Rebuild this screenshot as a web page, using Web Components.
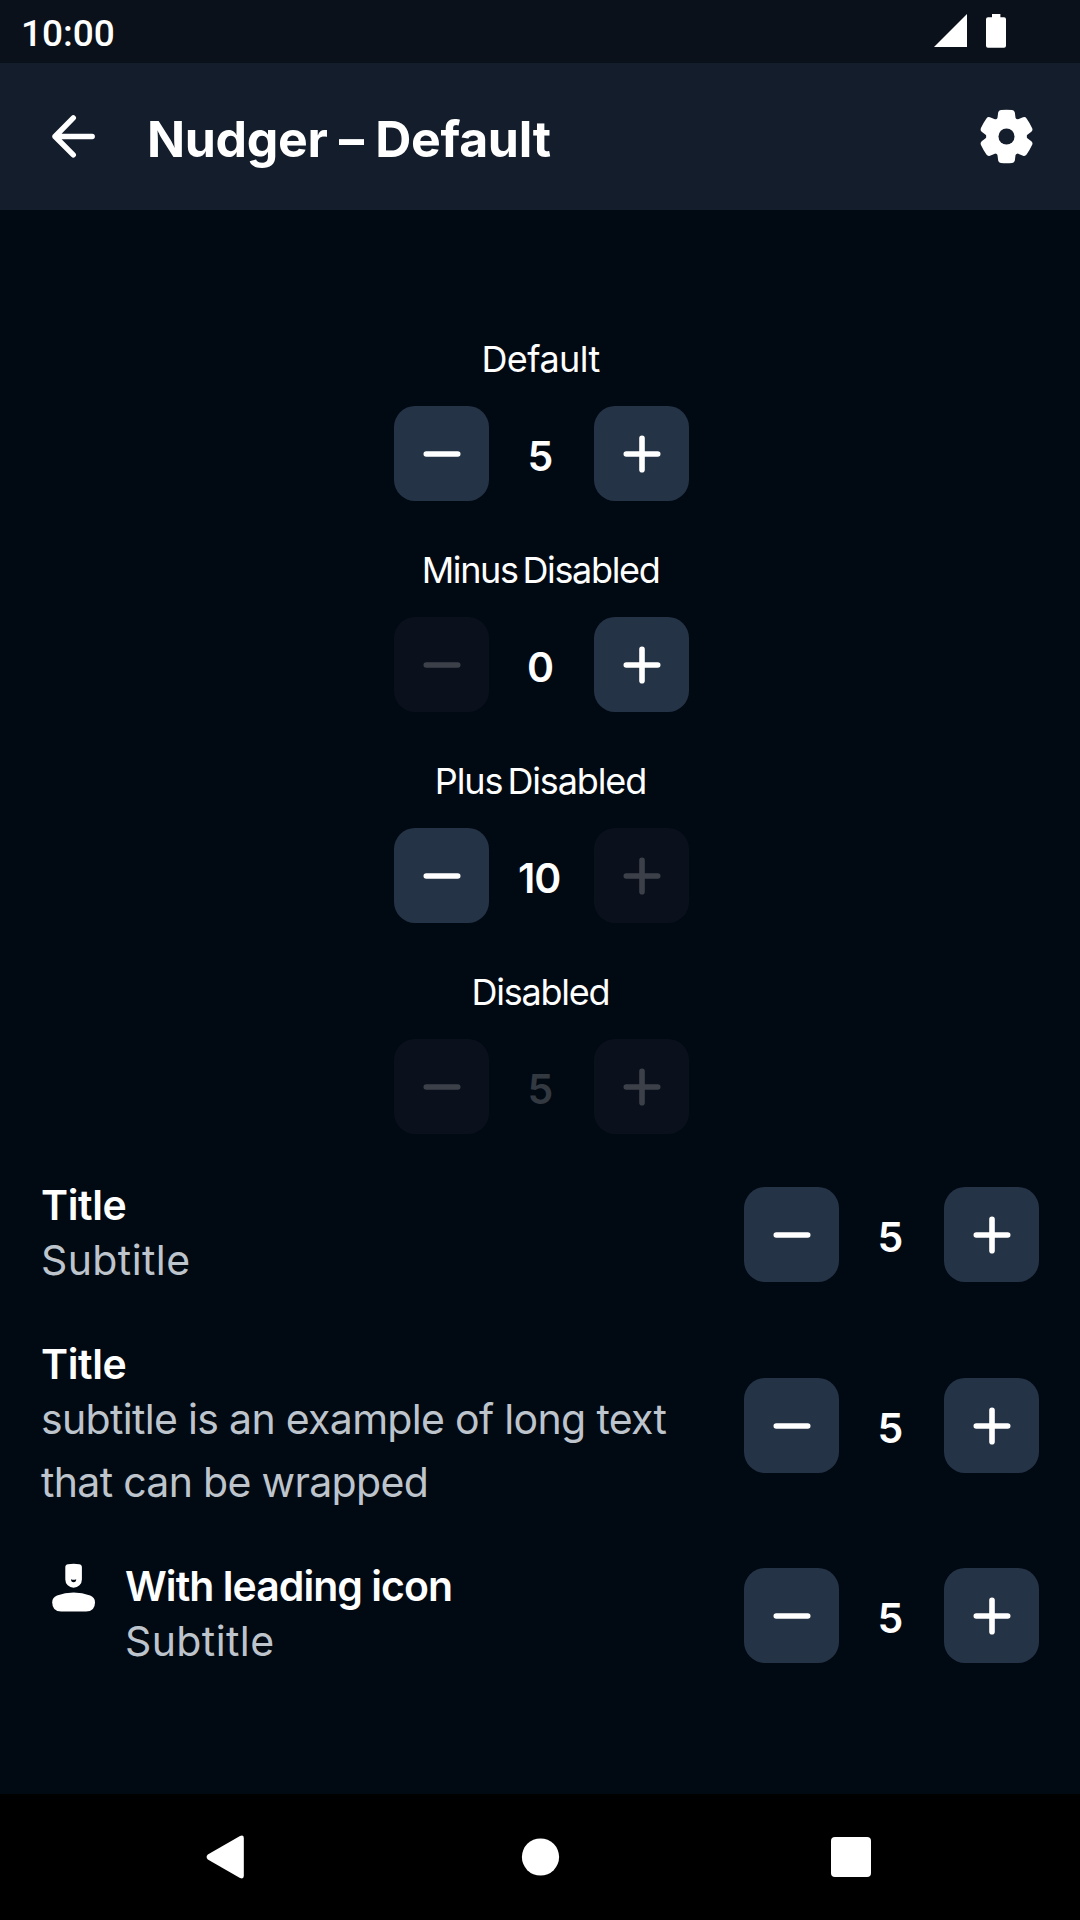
<!DOCTYPE html>
<html lang="en">
<head>
<meta charset="utf-8">
<title>Nudger – Default</title>
<style>
html,body{margin:0;padding:0;background:#010913}
body{width:1080px;height:1920px;overflow:hidden;font-family:Inter,"Liberation Sans",sans-serif;color:#fff}
</style>
</head>
<body>
<nudger-screen></nudger-screen>
<script>
const define = (name, html) => customElements.define(name, class extends HTMLElement {
  connectedCallback() {
    if (this.shadowRoot) return;
    const t = document.createElement('template');
    t.innerHTML = typeof html === 'function' ? html(this) : html;
    this.attachShadow({mode: 'open'}).append(t.content);
  }
});

define('status-bar', `<style>
:host{display:flex;justify-content:space-between;height:63px;box-sizing:border-box;padding-left:21px;padding-right:74px;background:#0a111a;font:500 37px/63px Roboto,sans-serif}
span{padding-top:2px;height:61px}
svg{display:block;width:72px;height:63px}
</style><span>10:00</span>
<svg viewBox="934 0 72 63" fill="#fff"><path d="M934 47L967 14V47Z"/><path d="M992 14h8.400v3.300h3.600q2 0 2 2v26.500q0 2-2 2h-16q-2 0-2-2V19.300q0-2 2-2h4Z"/></svg>`);

define('app-bar', `<style>
:host{display:flex;align-items:center;height:147px;box-sizing:border-box;padding:0 42px;background:#131d2b}
svg{display:block;width:63px;height:63px;flex:none}
h1{flex:1;margin:0 0 0 42px;padding-top:4px;font:700 50px/60px Inter,sans-serif;letter-spacing:-.32px;white-space:nowrap}
</style>
<svg viewBox="42 105 63 63" fill="none" stroke="#fff" stroke-width="5.400" stroke-linecap="round" stroke-linejoin="round"><path d="M92.200 136.500H55M73.300 117.900L55 136.500L73.300 154.900"/></svg>
<h1><slot></slot></h1>
<svg viewBox="-31 -31 62 62"><g fill="#fff"><circle r="20"/><g id="a"><path id="t" d="M-10.500-14Q-9-17-8.800-19L-8.200-23.500Q-7.800-25.700-5.500-26Q0-26.500 5.500-26Q7.800-25.700 8.200-23.500L8.800-19Q9-17 10.500-14Z"/><use href="#t" transform="rotate(60)"/><use href="#t" transform="rotate(120)"/></g><use href="#a" transform="rotate(180)"/></g><circle r="7.900" fill="#131d2b"/></svg>`);

define('nudger-button', el => `<style>
:host{display:block;width:95px;height:95px;border-radius:21px;background:#243346;color:#fff;flex:none}
:host([disabled]){background:#0b111c;color:#3c4049}
svg{display:block}
</style><svg width="95" height="95" viewBox="0 0 95 95" fill="none" stroke="currentColor" stroke-width="5.600" stroke-linecap="round"><path d="M32.300 48H63.700${el.getAttribute('kind') === 'plus' ? 'M48 32.300V63.700' : ''}"/></svg>`);

define('value-nudger', el => {
  const off = el.getAttribute('off') || '';
  const dis = k => off === k || off === 'all' ? 'disabled' : '';
  const v = el.getAttribute('value');
  return `<style>
:host{display:flex;width:295px;height:95px;flex:none}
span{flex:1;box-sizing:border-box;padding:3px ${v.length > 1 ? 5 : 2}px 0 0;text-align:center;font:600 41px/95px Inter,sans-serif;color:${off === 'all' ? '#333941' : '#fff'};letter-spacing:${v.length > 1 ? '-1.2px' : '0'}}
</style><nudger-button kind="minus" ${dis('minus')}></nudger-button><span>${v}</span><nudger-button kind="plus" ${dis('plus')}></nudger-button>`;
});

define('labelled-nudger', el => `<style>
:host{display:flex;flex-direction:column;align-items:center;gap:21px;padding-left:3px}
label{padding-right:2px;font:400 36px/52px Inter,sans-serif;letter-spacing:${el.getAttribute('track')}px;word-spacing:-4px;white-space:nowrap}
</style><label><slot></slot></label><value-nudger value="${el.getAttribute('value')}" off="${el.getAttribute('off') || ''}"></value-nudger>`);

define('nudger-row', el => `<style>
:host{display:flex;align-items:center;justify-content:space-between;padding:0 41px}
.lead{display:flex;align-items:flex-start}
.text{padding-top:4px;margin-bottom:-1px}
.t{font:600 41px/47px Inter,sans-serif;letter-spacing:${el.getAttribute('track') || '-.4'}px}
.s{font:400 41px/63px Inter,sans-serif;color:#bdc4cb;letter-spacing:${el.getAttribute('subtrack') || '.4'}px;white-space:nowrap}
::slotted(svg){display:block;margin:0 20px 0 1px}
</style><div class="lead"><slot name="icon"></slot><div class="text"><div class="t"><slot></slot></div><div class="s"><slot name="subtitle"></slot></div></div></div><value-nudger value="5"></value-nudger>`);

define('navigation-bar', `<style>
:host{display:flex;justify-content:space-between;align-items:center;height:126px;box-sizing:border-box;padding:0 209px 0 206px;background:#000}
svg{display:block;overflow:visible}
</style>
<svg width="38" height="44" viewBox="0 0 38 44" fill="#fff"><path d="M1.800 19.500L34 1Q37.800-.5 37.800 3V41Q37.800 44.500 34 43L1.800 24.500Q-.6 22 1.800 19.500Z"/></svg>
<svg width="38" height="38" viewBox="0 0 38 38" fill="#fff"><circle cx="21.500" cy="19" r="18.600"/></svg>
<svg width="40" height="40" viewBox="0 0 40 40" fill="#fff"><rect width="40" height="40" rx="4"/></svg>`);

define('nudger-screen', `<style>
:host{display:flex;flex-direction:column;width:1080px;height:1920px;background:#010913}
main{flex:1;padding-top:123px}
.stack{display:flex;flex-direction:column;gap:43px}
.rows{display:flex;flex-direction:column;gap:46px;margin-top:44px}
</style>
<status-bar></status-bar>
<app-bar>Nudger – Default</app-bar>
<main>
<div class="stack">
<labelled-nudger value="5" track="-.58">Default</labelled-nudger>
<labelled-nudger value="0" off="minus" track="-1.35">Minus Disabled</labelled-nudger>
<labelled-nudger value="10" off="plus" track="-1.12">Plus Disabled</labelled-nudger>
<labelled-nudger value="5" off="all" track="-1.24">Disabled</labelled-nudger>
</div>
<div class="rows">
<nudger-row>Title<span slot="subtitle">Subtitle</span></nudger-row>
<nudger-row subtrack="-.68">Title<span slot="subtitle">subtitle is an example of long text<br>that can be wrapped</span></nudger-row>
<nudger-row track="-.96"><svg slot="icon" width="63" height="63" viewBox="42 1559 63 63" fill="#fff"><path fill-rule="evenodd" d="M65.300 1567.200Q65.300 1564.500 68 1564.200Q73.600 1563.300 79.200 1564.200Q81.900 1564.500 81.900 1567.200V1579.500A8.300 8.300 0 0 1 65.300 1579.500ZM71 1579.300A2.600 3 0 0 0 76.200 1579.300Q73.600 1580.400 71 1579.300Z"/><path d="M52.200 1602.500Q52.200 1597.500 57 1595.600Q65 1592.500 73.600 1592.500Q82.200 1592.500 90.200 1595.600Q95 1597.500 95 1602.500Q95 1611.500 86 1611.500H61.200Q52.200 1611.500 52.200 1602.500Z"/></svg>With leading icon<span slot="subtitle">Subtitle</span></nudger-row>
</div>
</main>
<navigation-bar></navigation-bar>`);
</script>
</body>
</html>
